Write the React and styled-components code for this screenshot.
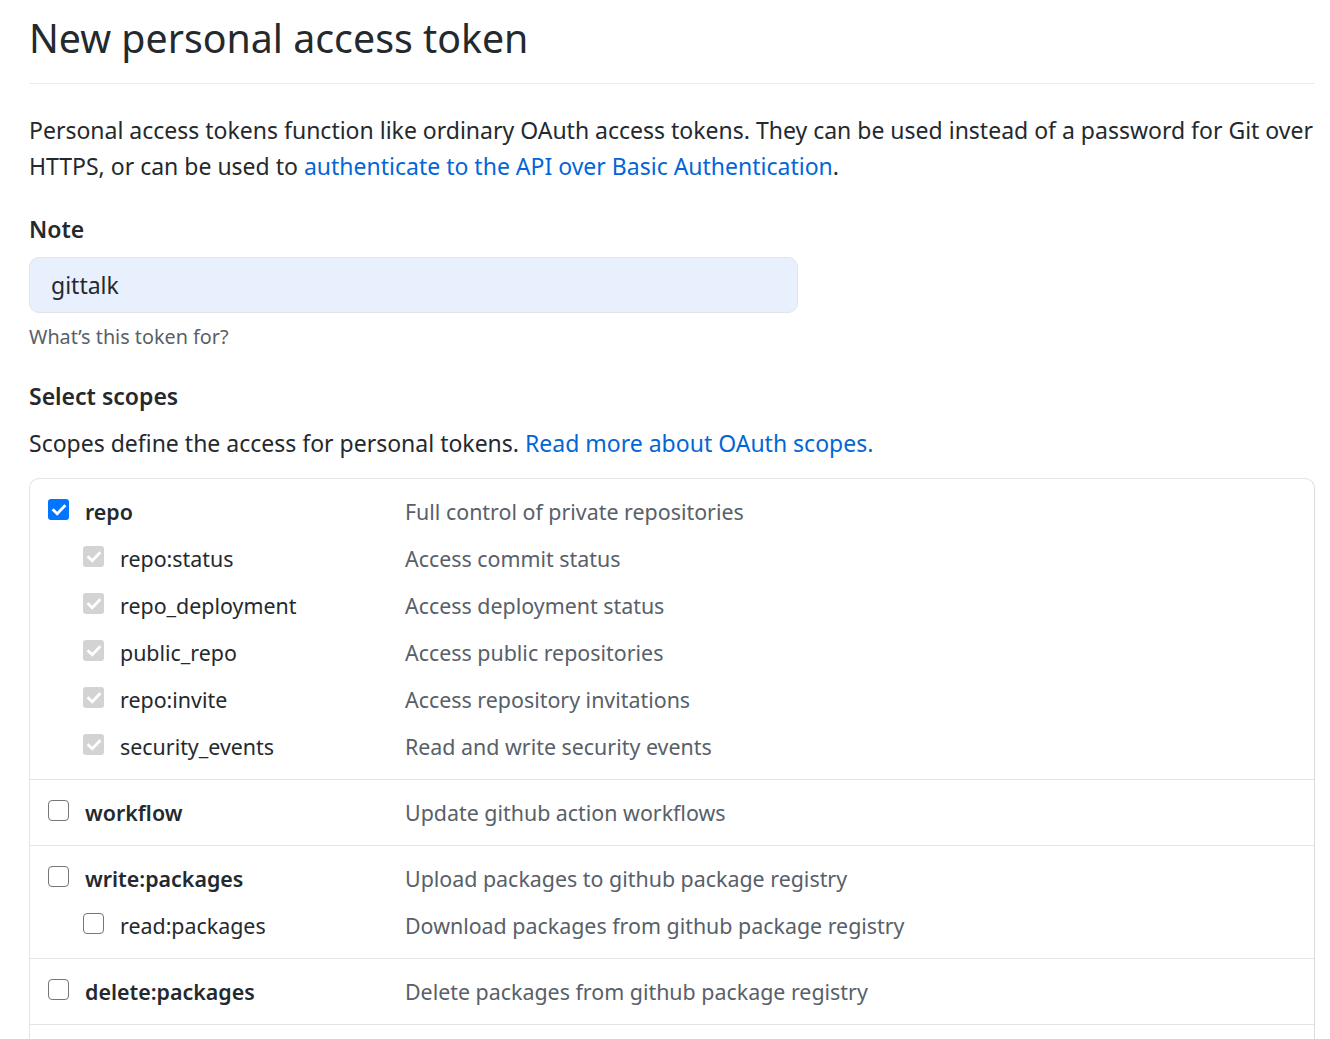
import React from 'react';
import styled, { createGlobalStyle } from 'styled-components';

const GlobalStyle = createGlobalStyle`
  body {
    margin: 0;
    background: #fff;
    color: #24292e;
    font-family: "Noto Sans", "Open Sans", sans-serif;
  }
`;

const scopes = [
  {
    name: 'repo',
    desc: 'Full control of private repositories',
    checked: true,
    children: [
      { name: 'repo:status', desc: 'Access commit status' },
      { name: 'repo_deployment', desc: 'Access deployment status' },
      { name: 'public_repo', desc: 'Access public repositories' },
      { name: 'repo:invite', desc: 'Access repository invitations' },
      { name: 'security_events', desc: 'Read and write security events' },
    ],
  },
  { name: 'workflow', desc: 'Update github action workflows' },
  {
    name: 'write:packages',
    desc: 'Upload packages to github package registry',
    children: [{ name: 'read:packages', desc: 'Download packages from github package registry' }],
  },
  { name: 'delete:packages', desc: 'Delete packages from github package registry' },
  {
    name: 'admin:org',
    desc: 'Full control of orgs and teams, read and write org projects',
    children: [
      { name: 'write:org', desc: 'Read and write org and team membership, read and write org projects' },
      { name: 'read:org', desc: 'Read org and team membership, read org projects' },
    ],
  },
];

const Page = styled.div`
  padding: 0 15px 0 29px;
`;

const Subhead = styled.div`
  padding-top: 12px;
  padding-bottom: 19px;
  border-bottom: 1px solid #eaecef;
`;

const Title = styled.h1`
  margin: 0;
  font-size: 39.3px;
  font-weight: 400;
  line-height: 52px;
`;

const Text = styled.p`
  margin: ${(p) => p.$mt || 0}px 0 0;
  font-size: 23px;
  line-height: 36px;
  white-space: nowrap;
`;

const Link = styled.a`
  color: #0366d6;
  text-decoration: none;
`;

const Label = styled.div`
  margin-top: ${(p) => p.$mt || 0}px;
  font-size: 23px;
  font-weight: 600;
  line-height: 36px;
`;

const Input = styled.input`
  display: block;
  box-sizing: border-box;
  width: 769px;
  height: 56px;
  margin-top: 10px;
  padding: 0 21px;
  border: 1px solid #e1e4e8;
  border-radius: 10px;
  background: #e8f0fe;
  color: #24292e;
  font-family: inherit;
  font-size: 23px;
  outline: none;
`;

const Hint = styled.div`
  margin-top: 9px;
  color: #586069;
  font-size: 19.8px;
  line-height: 30px;
`;

const ScopeBox = styled.div`
  margin-top: 17px;
  border: 1px solid #e1e4e8;
  border-right-color: #d8dbe0;
  border-radius: 10px 10px 0 0;
`;

const ScopeGroup = styled.div`
  padding: 9px 18px 9px;
  & + & {
    border-top: 1px solid #e1e4e8;
  }
`;

const ScopeLine = styled.div`
  display: grid;
  grid-template-columns: 357px 1fr;
  align-items: center;
  height: 47px;
  font-size: 21.4px;
`;

const ScopeName = styled.label`
  display: flex;
  align-items: center;
  gap: 16px;
  padding-left: ${(p) => (p.$sub ? 35 : 0)}px;
  font-weight: ${(p) => (p.$sub ? 400 : 600)};
  color: #24292e;
`;

const Desc = styled.span`
  color: #586069;
`;

const Box = styled.span`
  display: inline-flex;
  align-items: center;
  justify-content: center;
  flex: none;
  box-sizing: border-box;
  width: 21px;
  height: 21px;
  margin-bottom: 4px;
  border-radius: ${(p) => (p.$state === 'off' ? 4 : 3)}px;
  background: ${(p) => (p.$state === 'on' ? '#0075ff' : p.$state === 'dim' ? '#d3d3d3' : '#fff')};
  border: ${(p) => (p.$state === 'off' ? '1px solid #767676' : 'none')};
`;

const Checkbox = ({ state }) => (
  <Box $state={state}>
    {state !== 'off' && (
      <svg width="16" height="16" viewBox="0 0 16 16">
        <path d="M2.6 8.2 L6.2 11.7 L13.4 4.2" fill="none" stroke="#fff" strokeWidth="2.8" strokeLinecap="square" />
      </svg>
    )}
  </Box>
);

export default function App() {
  return (
    <>
      <GlobalStyle />
      <Page>
        <Subhead>
          <Title>New personal access token</Title>
        </Subhead>
        <Text $mt={28}>
          Personal access tokens function like ordinary OAuth access tokens. They can be used instead of a password for Git over
          <br />
          HTTPS, or can be used to <Link href="#">authenticate to the API over Basic Authentication</Link>.
        </Text>
        <Label $mt={27}>Note</Label>
        <Input type="text" defaultValue="gittalk" />
        <Hint>What’s this token for?</Hint>
        <Label $mt={26}>Select scopes</Label>
        <Text $mt={11}>
          Scopes define the access for personal tokens. <Link href="#">Read more about OAuth scopes.</Link>
        </Text>
        <ScopeBox>
          {scopes.map((s) => (
            <ScopeGroup key={s.name}>
              <ScopeLine>
                <ScopeName>
                  <Checkbox state={s.checked ? 'on' : 'off'} />
                  {s.name}
                </ScopeName>
                <Desc>{s.desc}</Desc>
              </ScopeLine>
              {(s.children || []).map((c) => (
                <ScopeLine key={c.name}>
                  <ScopeName $sub>
                    <Checkbox state={s.checked ? 'dim' : 'off'} />
                    {c.name}
                  </ScopeName>
                  <Desc>{c.desc}</Desc>
                </ScopeLine>
              ))}
            </ScopeGroup>
          ))}
        </ScopeBox>
      </Page>
    </>
  );
}
